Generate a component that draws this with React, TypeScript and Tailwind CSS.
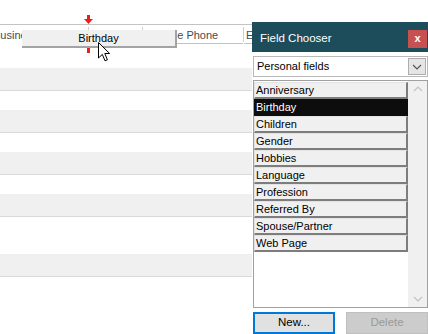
import React from 'react';

const fields = [
  'Anniversary',
  'Birthday',
  'Children',
  'Gender',
  'Hobbies',
  'Language',
  'Profession',
  'Referred By',
  'Spouse/Partner',
  'Web Page',
];

// grid body bands under the header: white gap, then a gray row closed by a line
const bands = [24, 19, 19, 19, 37];

const Chevron: React.FC<{ up?: boolean; color?: string }> = ({ up, color = '#606060' }) => (
  <svg width="10" height="6" viewBox="0 0 10 6">
    <polyline
      points={up ? '1,5 5,1 9,5' : '1,1 5,5 9,1'}
      fill="none"
      stroke={color}
      strokeWidth="1.2"
    />
  </svg>
);

export default function App() {
  return (
    <div className="relative w-[428px] h-[334px] overflow-hidden bg-white flex font-['Liberation_Sans',Arial,sans-serif]">
      {/* Table view */}
      <div className="w-[252px] shrink-0 flex flex-col overflow-hidden">
        <div className="h-[24px]" />
        <div className="h-[20px] w-[252px] border-t border-[#c3c3c3] flex text-[11px] text-[#4a4a4a]">
          <div className="w-[88px] overflow-hidden flex items-center pt-[2px]">
            <span className="-ml-[7px] whitespace-nowrap">Business Phone</span>
          </div>
          <div className="w-px h-[15px] bg-[#cfcfcf] self-center" />
          <div className="w-[53px]" />
          <div className="w-px h-[15px] bg-[#cfcfcf] self-center" />
          <div className="w-[100px] border-b border-[#c3c3c3] flex items-center pt-[2px] pl-[11px] whitespace-nowrap">Home Phone</div>
          <div className="w-px h-[15px] bg-[#cfcfcf] self-center" />
          <div className="flex-1 overflow-hidden border-b border-[#c3c3c3] flex items-center pt-[2px] pl-[2px]">E</div>
        </div>
        {bands.map((h, i) => (
          <React.Fragment key={i}>
            <div style={{ height: h }} />
            <div className="h-[22px] bg-[#f0f0f0]" />
            <div className="h-px bg-[#dadada]" />
          </React.Fragment>
        ))}
      </div>

      {/* Field Chooser */}
      <div className="w-[176px] shrink-0 pt-[22px] flex flex-col">
        <div className="h-[30px] bg-[#1d4d5a] flex justify-between items-start">
          <span className="pl-[8px] pt-[8px] text-[11.5px] text-white">Field Chooser</span>
          <div className="mt-[8px] mr-px w-[19px] h-[18px] bg-[#c75050] flex items-center justify-center text-white text-[11px] font-bold leading-none pb-[2px]">
            x
          </div>
        </div>
        <div className="pl-px flex flex-col">
          <div className="mt-[4px] h-[21px] border border-[#b9b9b9] bg-white flex items-center justify-between">
            <span className="pl-[3px] text-[11px] text-black">Personal fields</span>
            <div className="mr-px w-[18px] h-[17px] bg-[#e5e5e5] border border-[#adadad] flex items-center justify-center">
              <Chevron color="#555" />
            </div>
          </div>
          <div className="mt-[3px] h-[228px] border border-[#a0a0a0] flex">
            <div className="w-[154px] pt-px flex flex-col">
              {fields.map((f) =>
                f === 'Birthday' ? (
                  <div
                    key={f}
                    className="h-[17px] bg-[#0d0d0d] border border-[#0d0d0d] text-white text-[11px] leading-[15px] pl-px"
                  >
                    {f}
                  </div>
                ) : (
                  <div
                    key={f}
                    className="h-[17px] bg-[#f0f0f0] border-t border-l border-t-[#e3e3e3] border-l-[#e3e3e3] border-b-2 border-r-2 border-b-[#7d7d7d] border-r-[#7d7d7d] text-black text-[11px] leading-[14px] pl-px"
                  >
                    {f}
                  </div>
                )
              )}
            </div>
            <div className="flex-1 bg-[#f0f0f0] flex flex-col justify-between items-center py-[5px]">
              <Chevron up color="#c2c2c2" />
              <Chevron color="#c2c2c2" />
            </div>
          </div>
          <div className="mt-[4px] h-[22px] flex justify-between text-[11.5px]">
            <button className="w-[82px] border-2 border-[#0078d7] bg-[#e1e1e1] text-black">New...</button>
            <button className="w-[82px] border border-[#bfbfbf] bg-[#cccccc] text-[#9a9a9a]">Delete</button>
          </div>
        </div>
      </div>

      {/* Drag feedback */}
      <svg className="absolute z-10 left-[84px] top-[15px]" width="9" height="9" viewBox="0 0 9 9">
        <rect x="3" y="0" width="3" height="4" fill="#f21b1b" />
        <polygon points="0,4 9,4 4.5,9" fill="#f21b1b" />
      </svg>
      <svg className="absolute z-10 left-[84px] top-[40px]" width="9" height="13" viewBox="0 0 9 13">
        <polygon points="4.5,0 0,8 9,8" fill="#f21b1b" />
        <rect x="3" y="8" width="3" height="5" fill="#f21b1b" />
      </svg>
      <div className="absolute z-20 left-[22px] top-[30px] w-[155px] h-[18px] bg-[#f0f0f0] border-r-2 border-b-2 border-[#a3a3a3] flex items-center justify-center text-[11px] text-black">
        Birthday
      </div>
      <svg className="absolute z-30 left-[98px] top-[42px]" width="13" height="21" viewBox="0 0 13 21">
        <path d="M0.5,0.5 L0.5,16 L4.3,12.4 L7,18.8 L9.4,17.8 L6.8,11.5 L11.6,11.5 Z" fill="white" stroke="black" strokeWidth="1" strokeLinejoin="miter" />
      </svg>
    </div>
  );
}
